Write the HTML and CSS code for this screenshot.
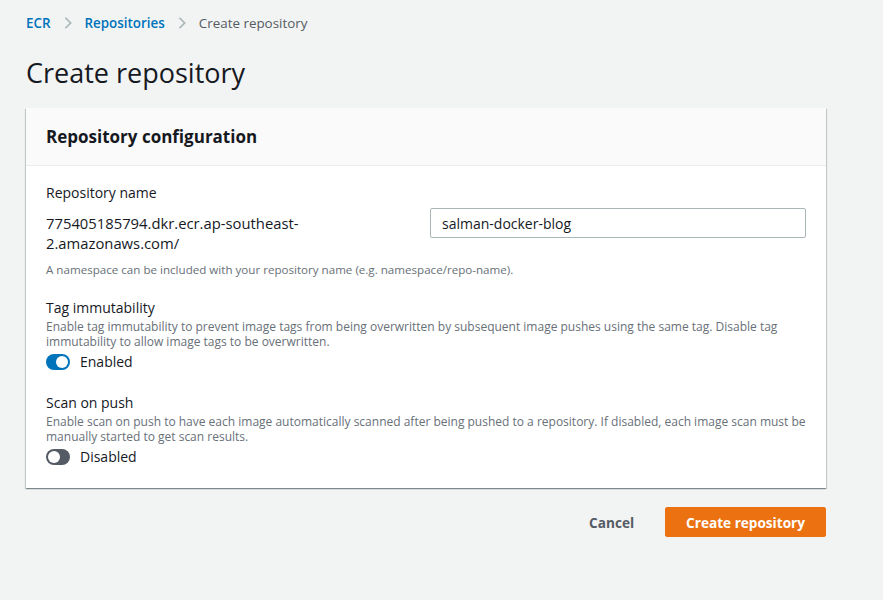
FILE: index.html
```html
<!DOCTYPE html>
<html lang="en">
<head>
    <meta charset="UTF-8">
    <meta name="viewport" content="width=device-width, initial-scale=1.0">
    <title>Create repository</title>
    <link rel="stylesheet" href="styles.css">
</head>
<body>
    <div class="page">
        <nav class="crumbs">
            <a href="#">ECR</a>
            <svg class="chev" viewBox="0 0 16 16"><path d="M5 2l6 6-6 6"/></svg>
            <a href="#">Repositories</a>
            <svg class="chev" viewBox="0 0 16 16"><path d="M5 2l6 6-6 6"/></svg>
            <span class="current">Create repository</span>
        </nav>

        <h1 class="title">Create repository</h1>

        <div class="card">
            <div class="card-head">
                <h2>Repository configuration</h2>
            </div>
            <div class="card-body">
                <div class="field">
                    <div class="label">Repository name</div>
                    <div class="name-row">
                        <div class="prefix">775405185794.dkr.ecr.ap-southeast-2.amazonaws.com/</div>
                        <input class="input" type="text" value="salman-docker-blog">
                    </div>
                    <div class="hint">A namespace can be included with your repository name (e.g. namespace/repo-name).</div>
                </div>

                <div class="field">
                    <div class="label">Tag immutability</div>
                    <div class="desc">Enable tag immutability to prevent image tags from being overwritten by subsequent image pushes using the same tag. Disable tag immutability to allow image tags to be overwritten.</div>
                    <label class="toggle">
                        <span class="switch on"></span>
                        <span>Enabled</span>
                    </label>
                </div>

                <div class="field">
                    <div class="label">Scan on push</div>
                    <div class="desc">Enable scan on push to have each image automatically scanned after being pushed to a repository. If disabled, each image scan must be manually started to get scan results.</div>
                    <label class="toggle">
                        <span class="switch"></span>
                        <span>Disabled</span>
                    </label>
                </div>
            </div>
        </div>

        <div class="actions">
            <button class="btn-link">Cancel</button>
            <button class="btn-primary">Create repository</button>
        </div>
    </div>
</body>
</html>
```

FILE: styles.css
```css
* {
    margin: 0;
    padding: 0;
    box-sizing: border-box;
}

body {
    background-color: #f2f3f3;
    font-family: "Open Sans", "Noto Sans", sans-serif;
    color: #16191f;
    font-size: 14px;
}

.page {
    padding: 13px 57px 0 26px;
}

.crumbs {
    display: flex;
    align-items: center;
    gap: 10px;
    height: 20px;
    font-size: 13.4px;
}

.crumbs a {
    color: #0073bb;
    text-decoration: none;
    font-weight: 600;
}

.crumbs .current {
    color: #545b64;
}

.chev {
    width: 14px;
    height: 14px;
    fill: none;
    stroke: #aab7b8;
    stroke-width: 2;
}

.title {
    font-size: 27px;
    font-weight: 400;
    margin-top: 25px;
    line-height: 30px;
}

.card {
    margin-top: 20px;
    background-color: #fff;
    box-shadow: 0 1px 1px 0 rgba(0, 28, 36, 0.3), 1px 1px 1px 0 rgba(0, 28, 36, 0.15), -1px 1px 1px 0 rgba(0, 28, 36, 0.15);
}

.card-head {
    background-color: #fafafa;
    border-bottom: 1px solid #eaeded;
    height: 58px;
    padding: 0 20px;
    display: flex;
    align-items: center;
}

.card-head h2 {
    font-size: 17px;
    font-weight: 700;
}

.card-body {
    padding: 16px 20px 20px;
    display: flex;
    flex-direction: column;
    gap: 19px;
}

.label {
    line-height: 22px;
}

.name-row {
    display: grid;
    grid-template-columns: 1fr 376px;
    gap: 20px;
    margin-top: 4px;
}

.prefix {
    font-size: 14.8px;
    line-height: 20px;
    padding-top: 5px;
    padding-right: 60px;
}

.input {
    height: 30px;
    border: 1px solid #aab7b8;
    border-radius: 2px;
    padding: 0 11px;
    font-family: inherit;
    font-size: 14px;
    color: #16191f;
}

.hint {
    font-size: 11.6px;
    line-height: 16px;
    color: #687078;
    margin-top: 9px;
}

.desc {
    font-size: 12px;
    color: #687078;
    line-height: 15px;
}

.toggle {
    display: flex;
    align-items: center;
    gap: 10px;
    margin-top: 2px;
    line-height: 22px;
}

.switch {
    position: relative;
    width: 24px;
    height: 16px;
    border-radius: 8px;
    background-color: #545b64;
}

.switch::after {
    content: "";
    position: absolute;
    top: 2px;
    left: 2px;
    width: 12px;
    height: 12px;
    border-radius: 50%;
    background-color: #fff;
}

.switch.on {
    background-color: #0073bb;
}

.switch.on::after {
    left: 10px;
}

.actions {
    display: flex;
    justify-content: flex-end;
    align-items: center;
    gap: 21px;
    margin-top: 19px;
}

.btn-link, .btn-primary {
    font-family: inherit;
    font-size: 13.6px;
    font-weight: 700;
    border: none;
    cursor: pointer;
    height: 30px;
    border-radius: 2px;
}

.btn-link {
    background: none;
    color: #545b64;
    padding: 0 10px;
}

.btn-primary {
    background-color: #ec7211;
    color: #fff;
    padding: 0 20px;
    border: 1px solid #ec7211;
}
```
